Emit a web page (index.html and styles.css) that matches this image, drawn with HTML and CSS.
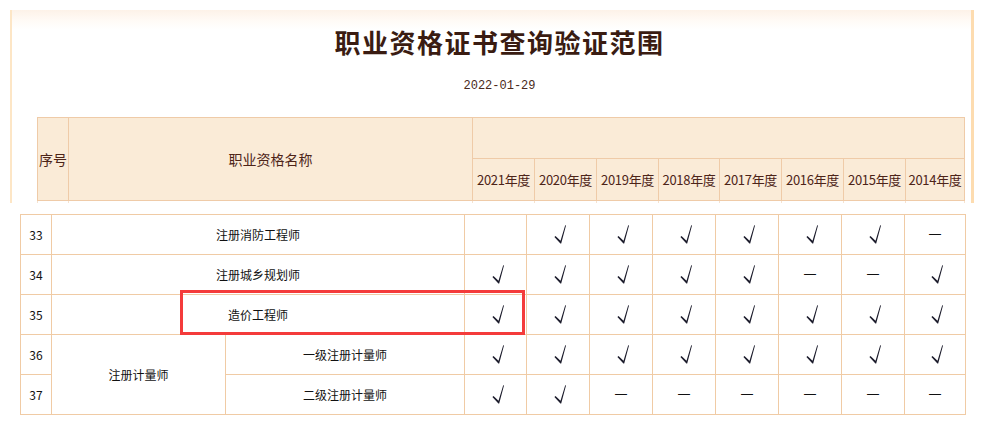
FILE: index.html
```html
<!DOCTYPE html>
<html lang="zh-CN">
<head>
    <meta charset="UTF-8">
    <meta name="viewport" content="width=device-width, initial-scale=1.0">
    <title>职业资格证书查询验证范围</title>
    <link rel="stylesheet" href="styles.css">
</head>
<body>
    <svg class="defs" width="0" height="0">
        <symbol id="tick" viewBox="0 0 12 19">
            <path d="M0.4 11.9 L1.5 11 L6.5 15.8 L11.2 0.2 L12 0.5 L7.2 18.6 L6.4 18.6 Z" />
        </symbol>
    </svg>

    <div class="snap">
        <h1 class="title">职业资格证书查询验证范围</h1>
        <p class="date">2022-01-29</p>
        <table class="head">
            <colgroup>
                <col style="width:31px"><col style="width:404px">
                <col style="width:62px"><col style="width:62px"><col style="width:62px"><col style="width:61px">
                <col style="width:62px"><col style="width:62px"><col style="width:62px"><col style="width:59px">
            </colgroup>
            <tr class="top">
                <th rowspan="2">序号</th>
                <th rowspan="2">职业资格名称</th>
                <th colspan="8"></th>
            </tr>
            <tr class="years">
                <th>2021年度</th><th>2020年度</th><th>2019年度</th><th>2018年度</th>
                <th>2017年度</th><th>2016年度</th><th>2015年度</th><th>2014年度</th>
            </tr>
            <tr class="stub">
                <td></td><td></td><td></td><td></td><td></td><td></td><td></td><td></td><td></td><td></td>
            </tr>
        </table>
    </div>

    <div class="sheet">
        <table class="grid">
            <colgroup>
                <col style="width:31px"><col style="width:174px"><col style="width:239px">
                <col style="width:62px"><col style="width:63px"><col style="width:63px"><col style="width:63px">
                <col style="width:63px"><col style="width:63px"><col style="width:63px"><col style="width:61px">
            </colgroup>
            <tr>
                <td>33</td><td colspan="2">注册消防工程师</td>
                <td></td>
                <td class="ok"><svg class="tick"><use href="#tick"/></svg></td>
                <td class="ok"><svg class="tick"><use href="#tick"/></svg></td>
                <td class="ok"><svg class="tick"><use href="#tick"/></svg></td>
                <td class="ok"><svg class="tick"><use href="#tick"/></svg></td>
                <td class="ok"><svg class="tick"><use href="#tick"/></svg></td>
                <td class="ok"><svg class="tick"><use href="#tick"/></svg></td>
                <td class="no">—</td>
            </tr>
            <tr>
                <td>34</td><td colspan="2">注册城乡规划师</td>
                <td class="ok"><svg class="tick"><use href="#tick"/></svg></td>
                <td class="ok"><svg class="tick"><use href="#tick"/></svg></td>
                <td class="ok"><svg class="tick"><use href="#tick"/></svg></td>
                <td class="ok"><svg class="tick"><use href="#tick"/></svg></td>
                <td class="ok"><svg class="tick"><use href="#tick"/></svg></td>
                <td class="no">—</td>
                <td class="no">—</td>
                <td class="ok"><svg class="tick"><use href="#tick"/></svg></td>
            </tr>
            <tr>
                <td>35</td><td colspan="2">造价工程师</td>
                <td class="ok"><svg class="tick"><use href="#tick"/></svg></td>
                <td class="ok"><svg class="tick"><use href="#tick"/></svg></td>
                <td class="ok"><svg class="tick"><use href="#tick"/></svg></td>
                <td class="ok"><svg class="tick"><use href="#tick"/></svg></td>
                <td class="ok"><svg class="tick"><use href="#tick"/></svg></td>
                <td class="ok"><svg class="tick"><use href="#tick"/></svg></td>
                <td class="ok"><svg class="tick"><use href="#tick"/></svg></td>
                <td class="ok"><svg class="tick"><use href="#tick"/></svg></td>
            </tr>
            <tr>
                <td>36</td><td rowspan="2">注册计量师</td><td>一级注册计量师</td>
                <td class="ok"><svg class="tick"><use href="#tick"/></svg></td>
                <td class="ok"><svg class="tick"><use href="#tick"/></svg></td>
                <td class="ok"><svg class="tick"><use href="#tick"/></svg></td>
                <td class="ok"><svg class="tick"><use href="#tick"/></svg></td>
                <td class="ok"><svg class="tick"><use href="#tick"/></svg></td>
                <td class="ok"><svg class="tick"><use href="#tick"/></svg></td>
                <td class="ok"><svg class="tick"><use href="#tick"/></svg></td>
                <td class="ok"><svg class="tick"><use href="#tick"/></svg></td>
            </tr>
            <tr>
                <td>37</td><td>二级注册计量师</td>
                <td class="ok"><svg class="tick"><use href="#tick"/></svg></td>
                <td class="ok"><svg class="tick"><use href="#tick"/></svg></td>
                <td class="no">—</td><td class="no">—</td>
                <td class="no">—</td><td class="no">—</td><td class="no">—</td><td class="no">—</td>
            </tr>
        </table>
        <div class="mark"></div>
    </div>
</body>
</html>
```

FILE: styles.css
```css
* {
    margin: 0;
    padding: 0;
    box-sizing: border-box;
}

body {
    font-family: "Noto Sans CJK SC", sans-serif;
    background-color: #fff;
    width: 985px;
    height: 426px;
    overflow: hidden;
}

.defs {
    position: absolute;
}

.snap {
    margin: 10px 0 0 10px;
    width: 964px;
    height: 193px;
    overflow: hidden;
    border-left: 2px solid #fde6c6;
    border-right: 3px solid #fddcb0;
    background: linear-gradient(to bottom, #fdf2e8, #fffaf5 10px, #fff 20px);
}

.title {
    margin-top: 14px;
    height: 36px;
    line-height: 36px;
    text-align: center;
    font-size: 26px;
    font-weight: bold;
    letter-spacing: 1.5px;
    color: #3a1c12;
    padding-left: 16px;
}

.date {
    margin-top: 18px;
    height: 16px;
    line-height: 16px;
    text-align: center;
    font-family: "Liberation Mono", monospace;
    font-size: 12px;
    color: #4a2a20;
    padding-left: 16px;
}

.head {
    margin: 23px 0 0 25px;
    width: 927px;
    table-layout: fixed;
    border-collapse: collapse;
    background-color: #faebd7;
    color: #4d2418;
}

.head th,
.head td {
    border: 1px solid #efcba8;
    font-weight: normal;
    text-align: center;
    white-space: nowrap;
    overflow: hidden;
}

.head .top th {
    height: 41px;
    font-size: 14px;
}

.head .years th {
    height: 42px;
    font-size: 13px;
    letter-spacing: -0.3px;
}

.head .stub td {
    height: 20px;
    background-color: #fff;
    border-color: #f6e2cf;
}

.sheet {
    position: relative;
    margin: 11px 0 0 20px;
}

.grid {
    width: 945px;
    table-layout: fixed;
    border-collapse: collapse;
    color: #111;
}

.grid td {
    height: 40px;
    border: 1px solid #f0cba5;
    text-align: center;
    font-size: 12px;
    white-space: nowrap;
}

.tick {
    display: block;
    width: 12px;
    height: 19px;
    margin: -1px auto 0;
    position: relative;
    left: 2px;
    fill: #1c1c2c;
}

.grid .no {
    font-family: "Liberation Sans", sans-serif;
    font-size: 12px;
    padding-bottom: 2px;
}

.mark {
    position: absolute;
    left: 160px;
    top: 76px;
    width: 345px;
    height: 45px;
    border: 3px solid #f43b3b;
}
```
